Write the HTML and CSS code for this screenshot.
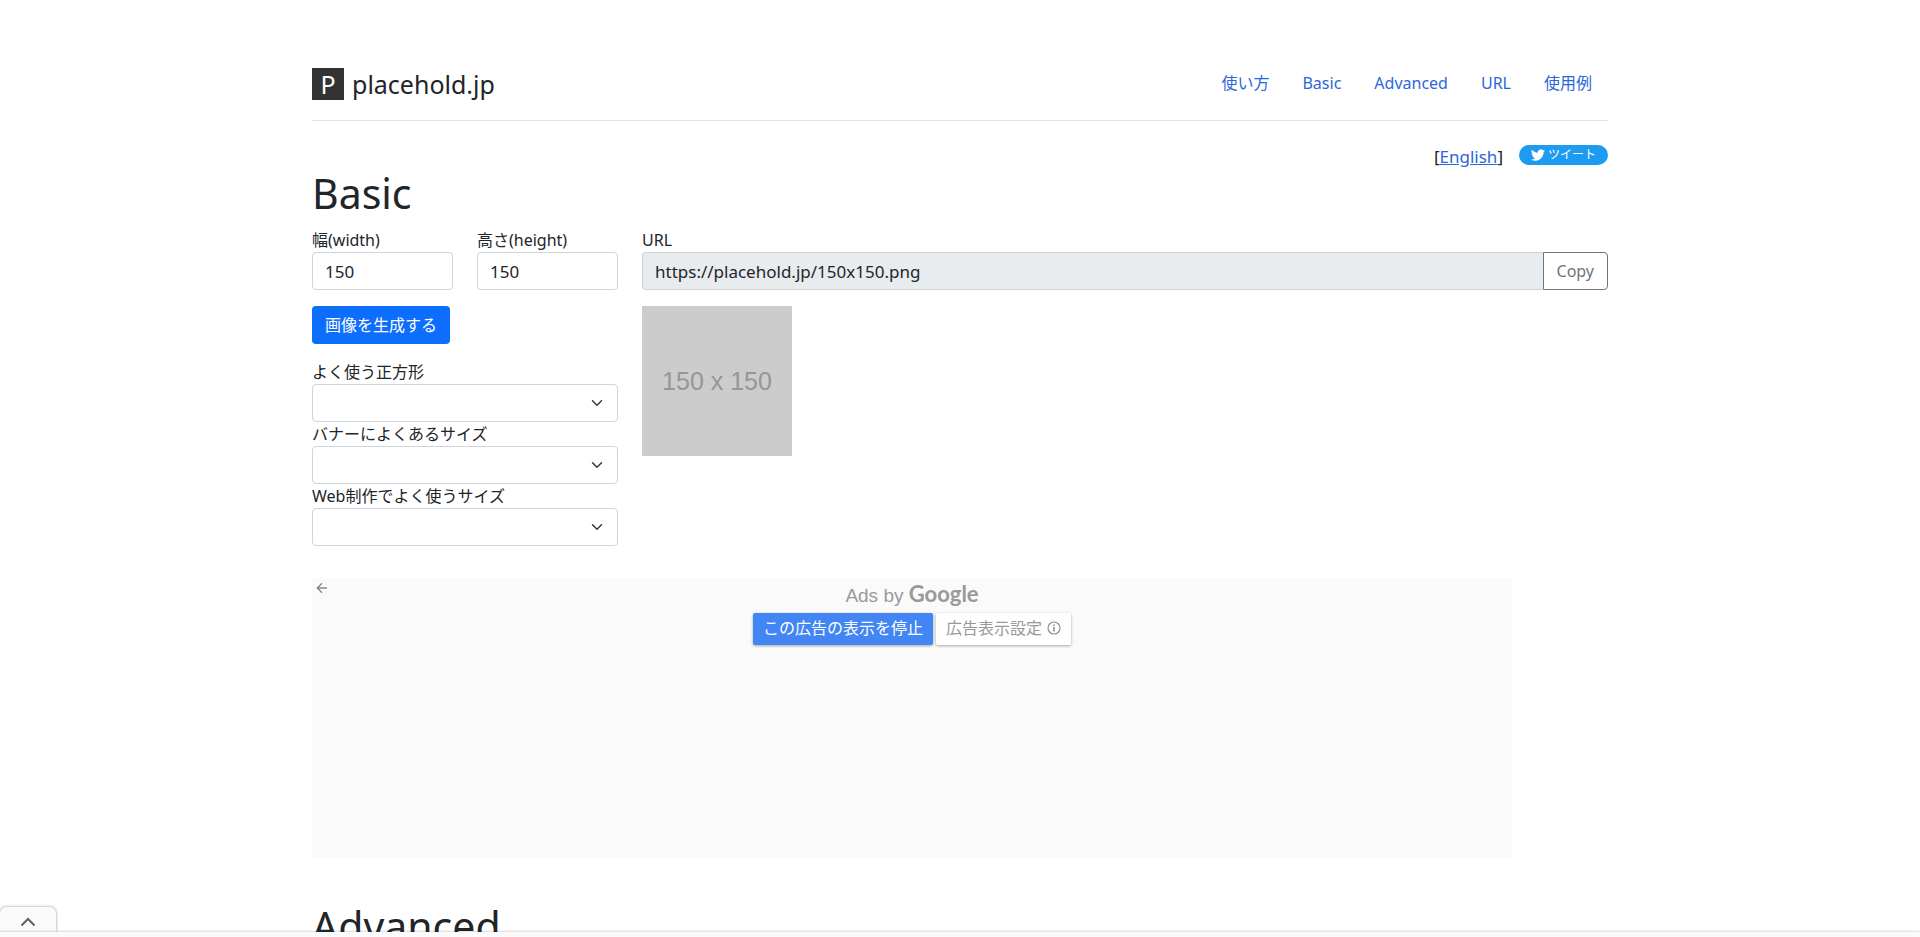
FILE: index.html
```html
<!DOCTYPE html>
<html lang="ja">
<head>
<meta charset="utf-8">
<title>placehold.jp</title>
<link rel="stylesheet" href="styles.css">
</head>
<body>
<div class="container">
  <header class="header">
    <a class="brand" href="#"><span class="brand-mark">P</span><span>placehold.jp</span></a>
    <nav class="nav">
      <a href="#usage">使い方</a>
      <a href="#basic">Basic</a>
      <a href="#advanced">Advanced</a>
      <a href="#url">URL</a>
      <a href="#examples">使用例</a>
    </nav>
  </header>
  <main>
    <div class="tools">
      <span class="lang">[<a href="#en">English</a>]</span>
      <a class="tweet" href="#tweet">
        <svg width="14" height="14" viewBox="0 0 24 24" aria-hidden="true"><path fill="#fff" d="M23.95 4.57a10 10 0 0 1-2.82.77 4.96 4.96 0 0 0 2.16-2.72c-.95.55-2 .95-3.13 1.18a4.92 4.92 0 0 0-8.38 4.48C7.69 8.1 4.07 6.13 1.64 3.16a4.93 4.93 0 0 0 1.52 6.57 4.9 4.9 0 0 1-2.23-.61v.06a4.92 4.92 0 0 0 3.95 4.83 5 5 0 0 1-2.21.08 4.94 4.94 0 0 0 4.6 3.42A9.87 9.87 0 0 1 0 19.54a13.94 13.94 0 0 0 7.55 2.21c9.05 0 14-7.5 14-13.98 0-.21 0-.42-.02-.63a9.94 9.94 0 0 0 2.42-2.57z"/></svg>
        ツイート
      </a>
    </div>
    <h1 id="basic">Basic</h1>
    <div class="columns">
      <form class="settings">
        <div class="sizes">
          <div class="field"><label for="w">幅(width)</label><input class="control" id="w" type="text" value="150"></div>
          <div class="field"><label for="h">高さ(height)</label><input class="control" id="h" type="text" value="150"></div>
        </div>
        <button class="primary" type="button">画像を生成する</button>
        <div class="field"><label for="sq">よく使う正方形</label><select class="control select" id="sq"><option></option></select></div>
        <div class="field"><label for="bn">バナーによくあるサイズ</label><select class="control select" id="bn"><option></option></select></div>
        <div class="field"><label for="web">Web制作でよく使うサイズ</label><select class="control select" id="web"><option></option></select></div>
      </form>
      <div class="result">
        <div class="field">
          <label for="out">URL</label>
          <div class="group"><input class="control readonly" id="out" type="text" readonly value="https://placehold.jp/150x150.png"><button class="copy" type="button">Copy</button></div>
        </div>
        <div class="sample">150 x 150</div>
      </div>
    </div>
    <aside class="ad">
      <button class="back" type="button" aria-label="戻る"><svg width="12" height="12" viewBox="0 0 12 12" fill="none" stroke="#858585" stroke-width="1.3"><path d="M11 6H1.5M6 1.3 1.3 6 6 10.7"/></svg></button>
      <div class="ad-title">Ads by <span class="google">Google</span></div>
      <div class="ad-buttons">
        <button class="stop" type="button">この広告の表示を停止</button>
        <button class="prefs" type="button">広告表示設定
          <svg width="14" height="14" viewBox="0 0 14 14" fill="none" stroke="#8f8f8f" stroke-width="1.2" aria-hidden="true"><circle cx="7" cy="7" r="6"/><path d="M7 6v4.5M7 3.5v1.4" stroke-width="1.6"/></svg>
        </button>
      </div>
    </aside>
    <h1 id="advanced">Advanced</h1>
  </main>
</div>
<div class="anchor">
  <button class="anchor-tab" type="button" aria-label="開く"><svg width="16" height="10" viewBox="0 0 16 10" fill="none" stroke="#616161" stroke-width="2"><path d="M1.5 8.5 8 2l6.5 6.5"/></svg></button>
  <div class="anchor-bar"></div>
</div>
</body>
</html>
```
FILE: styles.css
```css
* { box-sizing: border-box; }
body {
  margin: 0;
  height: 100vh;
  overflow: hidden;
  background: #fff;
  color: #212529;
  font: 16px/24px "Noto Sans", "Noto Sans CJK JP", sans-serif;
}
button, input, select { font: inherit; color: inherit; margin: 0; }
a { color: #2b67d9; }
.container { max-width: 1320px; margin: 0 auto; padding: 48px 12px; }
.header {
  display: flex;
  justify-content: space-between;
  align-items: center;
  padding: 16px 0;
  margin-bottom: 24px;
  border-bottom: 1px solid #dee2e6;
}
.brand {
  display: flex;
  align-items: center;
  gap: 8px;
  color: #212529;
  font-size: 25px;
  line-height: 32px;
  text-decoration: none;
}
.brand-mark { width: 32px; background: #333; color: #fff; text-align: center; }
.nav { display: flex; gap: 1px; }
.nav a { padding: 7px 16px 9px; text-decoration: none; }
.tools { display: flex; justify-content: flex-end; align-items: flex-start; gap: 16px; }
.lang { font-size: 17px; }
.tweet {
  display: flex;
  align-items: center;
  gap: 3px;
  height: 20px;
  padding: 0 12px;
  border-radius: 10px;
  background: #1d9bf0;
  color: #fff;
  font-size: 12px;
  line-height: 20px;
  text-decoration: none;
}
h1 { margin: 0 0 11px; font-size: 41px; line-height: 48px; font-weight: 400; }
.columns { display: grid; grid-template-columns: minmax(0, 306fr) minmax(0, 966fr); gap: 24px; }
.sizes { display: grid; grid-template-columns: 1fr 1fr; gap: 24px; }
.field { display: flex; flex-direction: column; }
.control {
  width: 100%;
  height: 38px;
  padding: 6px 12px;
  border: 1px solid #ced4da;
  border-radius: 4px;
  background: #fff;
  font-size: 17px;
}
.select {
  appearance: none;
  background: #fff url("data:image/svg+xml,%3Csvg xmlns='http://www.w3.org/2000/svg' viewBox='0 0 16 16'%3E%3Cpath fill='none' stroke='%23343a40' stroke-linecap='round' stroke-linejoin='round' stroke-width='2' d='M2 5l6 6 6-6'/%3E%3C/svg%3E") no-repeat right 14px center / 12px 12px;
}
.primary {
  display: block;
  height: 38px;
  margin: 16px 0 16px;
  padding: 0 13px;
  border: 0;
  border-radius: 4px;
  background: #0d6efd;
  color: #fff;
}
.group { display: flex; }
.readonly { flex: 1; background: #e9ecef; border-right: 0; border-radius: 4px 0 0 4px; }
.copy {
  height: 38px;
  padding: 0 13px;
  border: 1px solid #6c757d;
  border-radius: 0 4px 4px 0;
  background: #fff;
  color: #6c757d;
}
.sample {
  width: 150px;
  margin-top: 16px;
  background: #ccc;
  color: #969696;
  font: 25px/150px "Liberation Sans", sans-serif;
  text-align: center;
}
.ad {
  position: relative;
  max-width: 1200px;
  height: 280px;
  margin: 32px 0 44px;
  background: #fafafa;
  text-align: center;
}
.back { position: absolute; left: 4px; top: 4px; display: flex; padding: 0; border: 0; background: none; }
.ad-title { padding-top: 2px; font: 19px/28px "Liberation Sans", sans-serif; color: #999; }
.google { font: 700 22px/28px Lato, sans-serif; }
.ad-buttons { display: flex; justify-content: center; gap: 3px; padding-top: 3px; }
.stop, .prefs {
  display: flex;
  align-items: center;
  gap: 5px;
  height: 32px;
  border: 0;
  border-radius: 2px;
  box-shadow: 0 1px 3px rgba(0, 0, 0, 0.35);
}
.stop { padding: 0 10px 2px; background: #4285f4; color: #fff; }
.prefs { padding: 0 10px 2px; background: #fff; color: #999; }
.anchor { position: fixed; left: 0; right: 0; bottom: 0; }
.anchor-tab {
  display: flex;
  align-items: center;
  justify-content: center;
  width: 56px;
  height: 25px;
  padding: 4px 0 0;
  border: 0;
  border-radius: 6px 6px 0 0;
  background: #fafafa;
  box-shadow: 0 0 3px rgba(0, 0, 0, 0.45);
}
.anchor-bar { position: relative; height: 5px; background: #fafafa; box-shadow: 0 -1px 2px rgba(0, 0, 0, 0.15); }
```
